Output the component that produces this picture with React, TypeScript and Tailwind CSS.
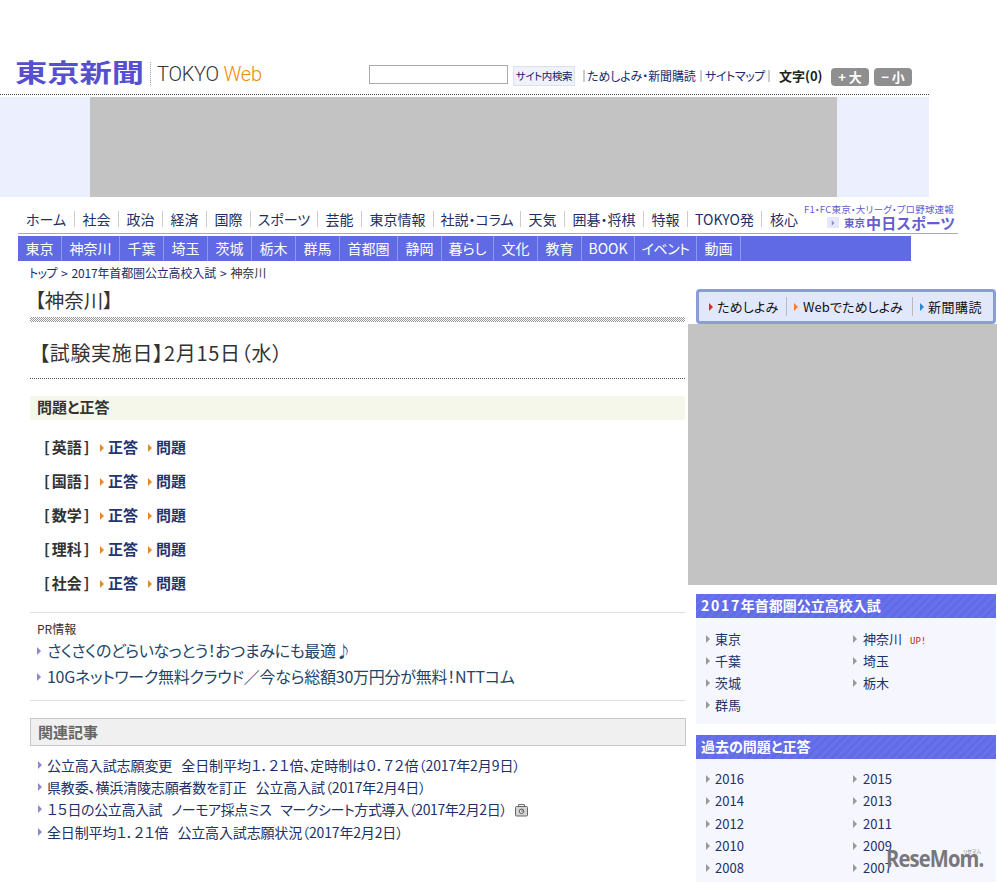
import clsx from "clsx";

const topNav = [
  { label: "ホーム", width: "w-[57px]" },
  { label: "社会", width: "w-[44px]" },
  { label: "政治", width: "w-[44px]" },
  { label: "経済", width: "w-[44px]" },
  { label: "国際", width: "w-[44px]" },
  { label: "スポーツ", width: "w-[67px]" },
  { label: "芸能", width: "w-[44px]" },
  { label: "東京情報", width: "w-[72px]" },
  { label: "社説・コラム", width: "w-[87px]" },
  { label: "天気", width: "w-[44px]" },
  { label: "囲碁・将棋", width: "w-[79px]" },
  { label: "特報", width: "w-[44px]" },
  { label: "TOKYO発", width: "w-[74px]" },
  { label: "核心", width: "w-[44px]" },
];

const areaNav = [
  { label: "東京", width: "w-[44px]" },
  { label: "神奈川", width: "w-[58px]" },
  { label: "千葉", width: "w-[44px]" },
  { label: "埼玉", width: "w-[44px]" },
  { label: "茨城", width: "w-[44px]" },
  { label: "栃木", width: "w-[44px]" },
  { label: "群馬", width: "w-[44px]" },
  { label: "首都圏", width: "w-[58px]" },
  { label: "静岡", width: "w-[44px]" },
  { label: "暮らし", width: "w-[52px]" },
  { label: "文化", width: "w-[44px]" },
  { label: "教育", width: "w-[44px]" },
  { label: "BOOK", width: "w-[53px]" },
  { label: "イベント", width: "w-[62px] tracking-[-0.5px]" },
  { label: "動画", width: "w-[44px]" },
];

const subjects = ["英語", "国語", "数学", "理科", "社会"];

const prLinks = [
  {
    label: "さくさくのどらいなっとう！おつまみにも最適♪",
    text: "tracking-[-0.4px]",
  },
  {
    label: "10Gネットワーク無料クラウド／今なら総額30万円分が無料！NTTコム",
    text: "tracking-[-0.26px]",
  },
];

const related = [
  {
    parts: [
      "公立高入試志願変更",
      "全日制平均１．２１倍、定時制は０．７２倍（2017年2月9日）",
    ],
    text: "tracking-[-0.08px]",
    row: "h-[22px]",
  },
  {
    parts: ["県教委、横浜清陵志願者数を訂正", "公立高入試（2017年2月4日）"],
    text: "tracking-[-0.15px]",
    row: "h-[21px]",
  },
  {
    parts: [
      "１５日の公立高入試",
      "ノーモア採点ミス",
      "マークシート方式導入（2017年2月2日）",
    ],
    text: "tracking-[-0.4px]",
    row: "h-[23px]",
    photo: true,
  },
  {
    parts: ["全日制平均１．２１倍", "公立高入試志願状況（2017年2月2日）"],
    text: "tracking-[-0.15px]",
    row: "h-[24px]",
  },
];

const prefectures = [
  ["東京", "神奈川"],
  ["千葉", "埼玉"],
  ["茨城", "栃木"],
  ["群馬", ""],
];

const years = [
  ["2016", "2015"],
  ["2014", "2013"],
  ["2012", "2011"],
  ["2010", "2009"],
  ["2008", "2007"],
];

const Arrow = ({ className }: { className: string }) => (
  <svg viewBox="0 0 4 8" className={clsx("h-2 w-1 shrink-0", className)}>
    <path d="M0 0 4 4 0 8Z" fill="currentColor" />
  </svg>
);

const Camera = () => (
  <svg viewBox="0 0 13 13" className="mt-1 ml-2 h-[13px] w-[13px]">
    <path d="M3.5 2.5v-2h6v2" fill="#eee" stroke="#777" />
    <rect x=".5" y="2.5" width="12" height="9.5" rx="1" fill="#d4d4d4" stroke="#666" />
    <circle cx="6.5" cy="7.3" r="2.2" fill="#eee" stroke="#555" />
    <circle cx="7" cy="7" r=".8" fill="#555" />
  </svg>
);

const Header = () => (
  <header className="flex h-[95px] w-[929px] items-start border-b border-dotted border-[#444] pt-[57px]">
    <div className="ml-[15px] w-[129px]">
      <h1 className="w-[100px] origin-left scale-x-[1.29] text-[25px] leading-[29px] font-bold whitespace-nowrap text-[#5650cf]">
        東京新聞
      </h1>
    </div>
    <div className="mt-[5px] ml-[6px] h-[23px] border-l border-dotted border-[#8fa3ad]" />
    <div className="mt-[5px] ml-[6px] w-[212px] font-[Roboto,sans-serif] text-[20px] leading-6 font-light tracking-[-0.25px] whitespace-nowrap text-[#333]">
      TOKYO <span className="text-[#f08c00]">Web</span>
    </div>
    <input
      type="text"
      aria-label="サイト内検索"
      className="mt-2 h-[19px] w-[139px] border border-[#aaa] bg-white"
    />
    <button className="mt-[9px] ml-[5px] h-5 w-[62px] border border-[#dde2ea] bg-[#eff3f9] text-[10.5px] leading-[18px] tracking-[-0.4px] whitespace-nowrap text-[#10206a]">
      サイト内検索
    </button>
    <div className="mt-[9px] ml-2 flex h-5 items-center text-[12px] leading-5 tracking-[-0.1px] whitespace-nowrap text-[#1c2c6c]">
      <span className="mr-[2px] h-3 border-l-2 border-[#ccc]" />
      <span className="w-[110px]">ためしよみ・新聞購読</span>
      <span className="mr-[3px] ml-[3px] h-3 border-l-2 border-[#ccc]" />
      <span className="w-[60px] tracking-[-0.4px]">サイトマップ</span>
      <span className="ml-[3px] h-3 border-l-2 border-[#ccc]" />
    </div>
    <div className="mt-[9px] ml-[9px] w-[52px] text-[13px] leading-5 font-bold text-[#222]">
      文字(0)
    </div>
    <button className="mt-[11px] h-[18px] w-[38px] rounded-sm bg-[#8f8f8f] text-[13px] leading-[16px] font-bold text-white">
      + 大
    </button>
    <button className="mt-[11px] ml-[5px] h-[18px] w-[38px] rounded-sm bg-[#8f8f8f] text-[13px] leading-[16px] font-bold text-white">
      − 小
    </button>
  </header>
);

const Navigation = () => (
  <nav className="ml-[18px]">
    <div className="flex h-[37px] w-[940px] items-start border-b border-[#aaa]">
      <ul className="flex pt-[14px] text-[14px] leading-[18px] text-[#1d2f66]">
        {topNav.map((item, i) => (
          <li
            key={item.label}
            className={clsx(
              "flex h-4 items-center justify-center whitespace-nowrap",
              i < topNav.length - 1 && "border-r border-[#ccc]",
              item.width,
            )}
          >
            {item.label}
          </li>
        ))}
      </ul>
      <div className="w-[156px] pt-[6px] text-[#645cd0]">
        <p className="-ml-[2px] text-[9.5px] leading-[13px] tracking-[0.2px] whitespace-nowrap">
          F1・FC東京・大リーグ・プロ野球速報
        </p>
        <div className="ml-[21px] flex h-[13px] items-center leading-[13px] whitespace-nowrap">
          <span className="flex h-[11px] w-3 items-center justify-center bg-[#e8e8fb] text-[#8c8ccc]">
            <Arrow className="scale-75" />
          </span>
          <span className="ml-[5px] text-[10.5px] font-bold">東京</span>
          <span className="ml-[1px] text-[15px] font-bold tracking-[0.3px]">
            中日スポーツ
          </span>
        </div>
      </div>
    </div>
    <ul className="mt-[2px] flex h-[25px] w-[893px] bg-[#5f6ae4] text-[14px] leading-[25px] text-white">
      {areaNav.map((item) => (
        <li
          key={item.label}
          className={clsx(
            "border-r border-[#8f98f0] text-center whitespace-nowrap",
            item.width,
          )}
        >
          {item.label}
        </li>
      ))}
    </ul>
  </nav>
);

const Main = () => (
  <main className="w-[656px] text-[#333]">
    <p className="-ml-[1px] flex h-[24px] gap-[4px] text-[12px] leading-[24px] tracking-[-0.15px] whitespace-nowrap text-[#1c2c6c]">
      <span className="tracking-[-0.6px]">トップ</span>
      <span>&gt;</span>
      <span>2017年首都圏公立高校入試</span>
      <span>&gt;</span>
      <span className="text-[#333]">神奈川</span>
    </p>
    <h2 className="h-[32px] pl-[5px] text-[19.5px] leading-[29px]">【神奈川】</h2>
    <div className="h-[5px] w-[655px] bg-[repeating-conic-gradient(#999_0_25%,#fff_0_50%)] bg-[length:2px_2px]" />
    <div className="h-[57px] w-[655px] border-b border-dotted border-[#555] pt-[16px] pl-[9px] text-[20px] leading-[30px] tracking-[0.7px] whitespace-nowrap">
      【試験実施日】2月15日（水）
    </div>
    <h3 className="mt-[17px] h-6 w-[655px] bg-[#f5f7ea] pl-[7px] text-[15px] leading-[22px] font-bold">
      問題と正答
    </h3>
    <ul className="mt-[11px] text-[15px] leading-[32px] font-bold">
      {subjects.map((subject) => (
        <li key={subject} className="flex h-[34px] items-center pl-[14px]">
          <span className="w-14 pb-[2px]">
            <span className="mr-[2px]">[</span>
            {subject}
            <span className="ml-[2px]">]</span>
          </span>
          <Arrow className="text-[#e08a30]" />
          <span className="ml-1 w-10 pb-[2px] text-[#24346f]">正答</span>
          <Arrow className="text-[#e08a30]" />
          <span className="ml-1 pb-[2px] text-[#24346f]">問題</span>
        </li>
      ))}
    </ul>
    <section className="mt-[11px] h-[89px] w-[655px] border-y border-[#ddd] pt-[6px] pl-[7px]">
      <h4 className="text-[12px] leading-[19px]">PR情報</h4>
      <ul className="text-[16px] leading-[24px] text-[#234568]">
        {prLinks.map((link) => (
          <li key={link.label} className="flex h-[26px] items-center">
            <Arrow className="mr-[6px] text-[#8a8ad0]" />
            <span className={clsx("pb-[2px] whitespace-nowrap", link.text)}>
              {link.label}
            </span>
          </li>
        ))}
      </ul>
    </section>
    <h3 className="mt-[17px] h-7 border border-[#c8c8c8] bg-[#f0f0f0] pl-[7px] text-[15px] leading-[26px] font-bold text-[#666]">
      関連記事
    </h3>
    <ul className="mt-2 pl-[8px] text-[14px] leading-5 text-[#223068]">
      {related.map((item) => (
        <li key={item.parts.join()} className={clsx("flex items-center", item.row)}>
          <Arrow className="mr-[5px] text-[#8a8ad0]" />
          <span className={clsx("flex gap-[9px] whitespace-nowrap", item.text)}>
            {item.parts.map((part) => (
              <span key={part}>{part}</span>
            ))}
          </span>
          {item.photo && <Camera />}
        </li>
      ))}
    </ul>
  </main>
);

const SideTitle = ({ children }: { children: React.ReactNode }) => (
  <h3 className="h-6 bg-[repeating-linear-gradient(135deg,#6871ec_0_3px,#616be5_3px_6px)] pl-[5px] text-[14px] leading-[23px] font-bold text-white">
    {children}
  </h3>
);

const SideList = ({ rows, row }: { rows: string[][]; row: string }) => (
  <ul className="text-[13px] leading-5 text-[#223068]">
    {rows.map(([left, right]) => (
      <li key={left} className={clsx("flex items-center pl-[10px]", row)}>
        <Arrow className="text-[#999]" />
        <span className="ml-[5px] w-[138px]">{left}</span>
        {right && (
          <>
            <Arrow className="text-[#999]" />
            <span className="ml-[6px]">{right}</span>
          </>
        )}
        {right === "神奈川" && (
          <span className="mt-1 ml-2 font-['DejaVu_Sans_Mono',monospace] text-[9px] text-[#cc2020]">
            UP!
          </span>
        )}
      </li>
    ))}
  </ul>
);

const Sidebar = () => (
  <aside className="mt-[28px] ml-[2px] w-[309px]">
    <ul className="ml-2 flex h-[35px] w-[300px] items-center rounded-[4px] border-3 border-[#8a9dd8] bg-[#e2e8fb] text-[13px] whitespace-nowrap text-[#111]">
      <li className="flex w-[87px] items-center pl-[10px] tracking-[0.2px]">
        <Arrow className="mr-[4px] text-[#e02828]" />
        ためしよみ
      </li>
      <li className="flex w-[126px] items-center border-l border-[#bbb] pl-[7px] tracking-[0.1px]">
        <Arrow className="mr-[5px] text-[#f08030]" />
        Webでためしよみ
      </li>
      <li className="flex items-center border-l border-[#bbb] pl-[7px] tracking-[0.5px]">
        <Arrow className="mr-[4px] text-[#2888d8]" />
        新聞購読
      </li>
    </ul>
    <div className="h-[261px] bg-[#c3c3c3]" />
    <section className="mt-[9px] ml-2 h-[130px] w-[300px] bg-[#f5f6fe]">
      <SideTitle>
        <span className="tracking-[1.7px]">2017</span>年首都圏公立高校入試
      </SideTitle>
      <div className="pt-[10px]">
        <SideList rows={prefectures} row="h-[22px]" />
      </div>
    </section>
    <section className="mt-[11px] ml-2 h-[147px] w-[300px] bg-[#f5f6fe]">
      <SideTitle>過去の問題と正答</SideTitle>
      <div className="pt-[9px]">
        <SideList rows={years} row="h-[22.3px]" />
      </div>
    </section>
  </aside>
);

const App = () => (
  <div className="relative h-[882px] w-[997px] overflow-hidden bg-white font-['Noto_Sans_CJK_JP',sans-serif] [font-feature-settings:'palt']">
    <Header />
    <div className="mt-[2px] h-[100px] w-[929px] bg-[#ecf0fe] pl-[90px]">
      <div className="h-full w-[747px] bg-[#c3c3c3]" />
    </div>
    <Navigation />
    <div className="flex items-start pl-[30px]">
      <Main />
      <Sidebar />
    </div>
    <div className="absolute top-[846px] left-[886px] origin-left scale-x-[0.84] font-['Open_Sans',sans-serif] text-[24px] leading-6 font-bold tracking-[-1px] text-[#77777c]">
      ReseMom.
    </div>
    <span className="absolute top-[848px] left-[963px] text-[5px] leading-[5px] text-[#77777c]">
      リセマム
    </span>
  </div>
);

export default App;
